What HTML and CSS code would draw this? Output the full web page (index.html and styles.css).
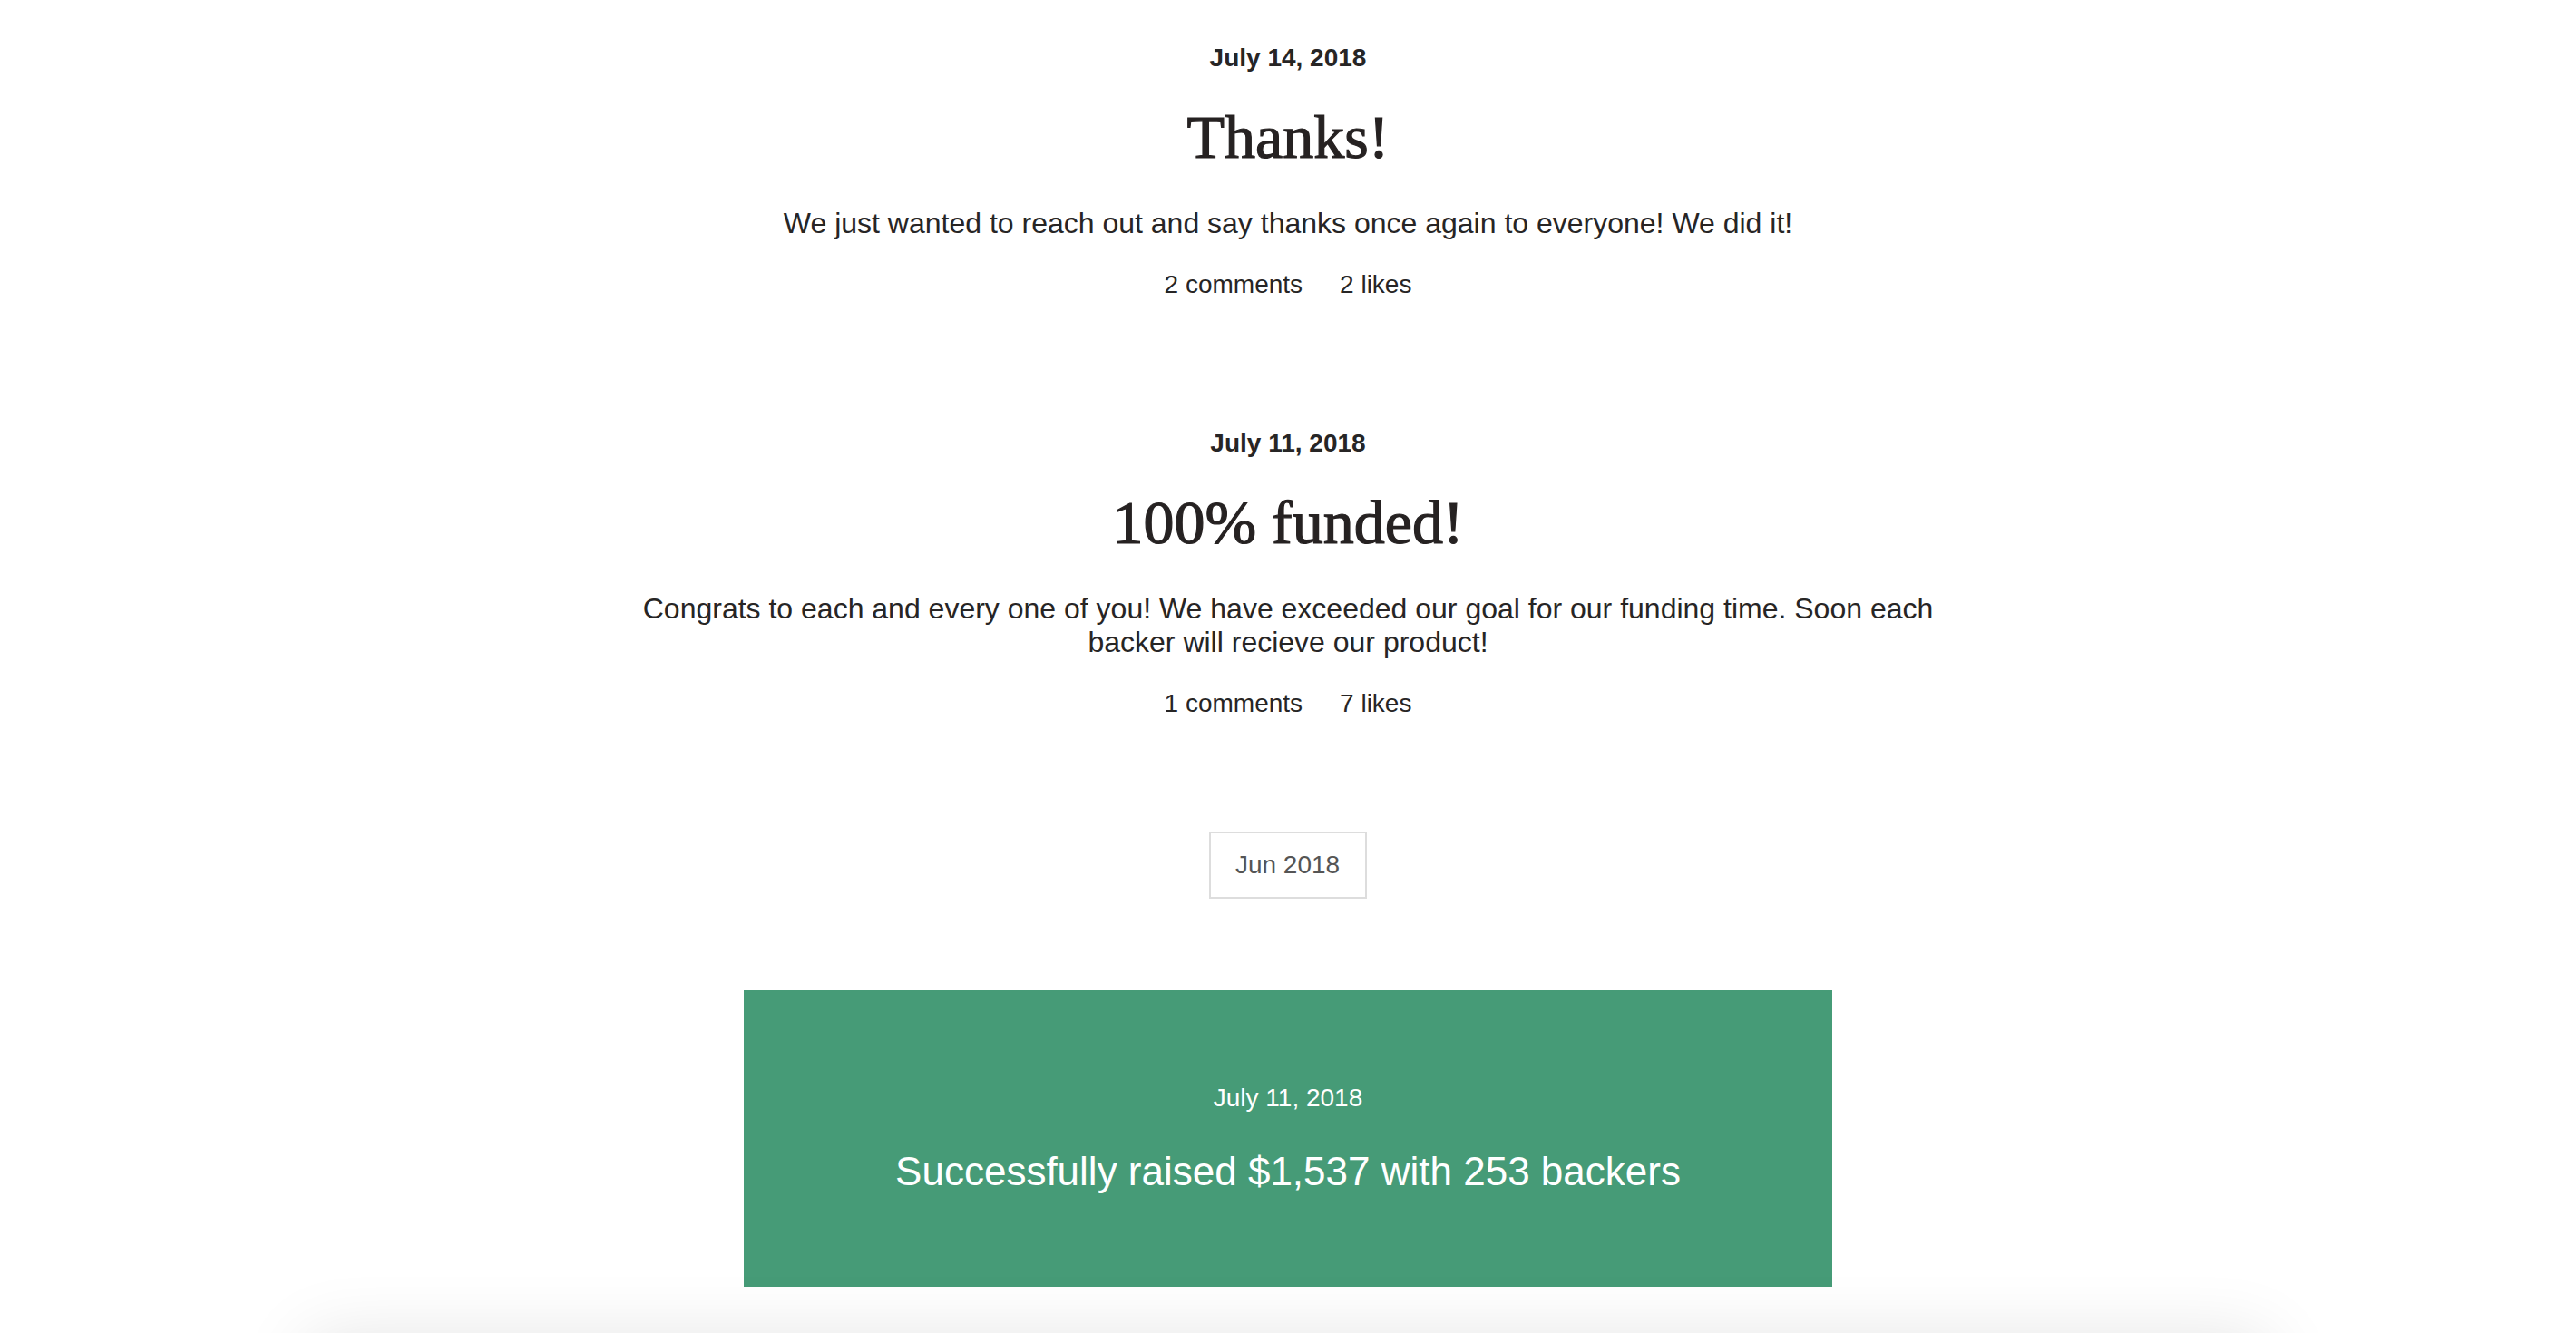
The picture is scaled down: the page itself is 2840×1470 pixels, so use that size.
FILE: index.html
```html
<!DOCTYPE html>
<html lang="en">
<head>
<meta charset="utf-8">
<title>Updates</title>
<link rel="stylesheet" href="styles.css">
</head>
<body>
<div class="page">
  <main class="updates">
    <article class="post">
      <div class="post-date">July 14, 2018</div>
      <h2 class="post-title">Thanks!</h2>
      <p class="post-body">We just wanted to reach out and say thanks once again to everyone! We did it!</p>
      <div class="post-meta"><span>2 comments</span><span>2 likes</span></div>
    </article>
    <article class="post">
      <div class="post-date">July 11, 2018</div>
      <h2 class="post-title">100% funded!</h2>
      <p class="post-body">Congrats to each and every one of you! We have exceeded our goal for our funding time. Soon each backer will recieve our product!</p>
      <div class="post-meta"><span>1 comments</span><span>7 likes</span></div>
    </article>
    <div class="month"><span class="month-label">Jun 2018</span></div>
    <section class="milestone">
      <div class="milestone-date">July 11, 2018</div>
      <div class="milestone-text">Successfully raised $1,537 with 253 backers</div>
    </section>
    <div class="footer-bar"></div>
  </main>
</div>
</body>
</html>
```
FILE: styles.css
```css
html, body {
  margin: 0;
  padding: 0;
  background: #ffffff;
}

body {
  font-family: "Liberation Sans", Arial, Helvetica, sans-serif;
  color: #272525;
}

.page {
  height: 100vh;
  overflow: hidden;
}

.updates {
  display: flex;
  flex-direction: column;
  align-items: center;
  padding-top: 48px;
}

.post {
  width: 1440px;
  display: flex;
  flex-direction: column;
  align-items: center;
  text-align: center;
}

.post + .post {
  margin-top: 143px;
}

.post-date {
  font-size: 28px;
  line-height: 32px;
  font-weight: 700;
}

.post-title {
  margin: 31px 0 0;
  font-family: "Liberation Serif", "Times New Roman", serif;
  font-weight: 400;
  font-size: 68px;
  line-height: 80px;
  color: #262222;
  -webkit-text-stroke: 1.2px #262222;
}

.post-body {
  margin: 37px 0 0;
  font-size: 32px;
  line-height: 37px;
}

.post-meta {
  margin-top: 33px;
  display: flex;
  justify-content: center;
  gap: 41px;
  font-size: 28px;
  line-height: 32px;
}

.month {
  margin-top: 125px;
  display: flex;
  justify-content: center;
}

.month-label {
  border: 2px solid #dddddd;
  padding: 19px 28px 19px 27px;
  font-size: 28px;
  line-height: 32px;
  color: #555555;
}

.milestone {
  margin-top: 101px;
  width: 1200px;
  background: #469b77;
  color: #ffffff;
  padding: 103px 0 102px;
  display: flex;
  flex-direction: column;
  align-items: center;
  text-align: center;
}

.milestone-date {
  font-size: 28px;
  line-height: 32px;
}

.milestone-text {
  margin-top: 40px;
  font-size: 44px;
  line-height: 50px;
}

.footer-bar {
  margin-top: 59px;
  width: 2160px;
  height: 200px;
  background: #ffffff;
  box-shadow: 0 0 80px rgba(0, 0, 0, 0.12);
}
```
